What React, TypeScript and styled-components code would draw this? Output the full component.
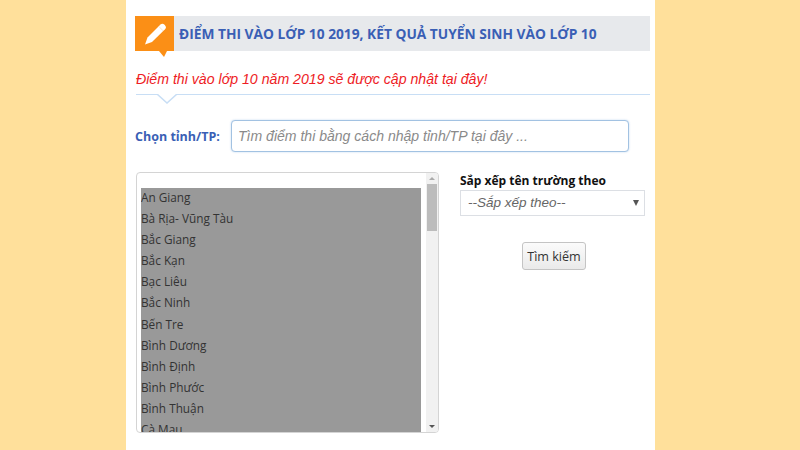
import React from "react";
import styled, { createGlobalStyle } from "styled-components";

const Global = createGlobalStyle`
  html, body { margin: 0; padding: 0; height: 450px; overflow: hidden; background: #ffe09b; }
  * { box-sizing: border-box; }
`;
const Page = styled.div`
  width: 800px; height: 450px; overflow: hidden; display: flex; padding-left: 126px; background: #ffe09b;
`;
const Column = styled.main`
  width: 529px; height: 450px; background: #fff; padding: 16px 5px 0 9px;
  font-family: "Liberation Sans", Arial, sans-serif; display: flex; flex-direction: column;
`;
const TitleBar = styled.header`
  height: 35px; background: #e7e9ec; display: flex; align-items: center; gap: 5px;
`;
const Badge = styled.div`
  position: relative; width: 39px; height: 35px; background: #fb8f16; display: flex; align-items: center; justify-content: center;
  &::after { content: ""; position: absolute; left: 24px; top: 35px; border-top: 6px solid #fb8f16; border-left: 5px solid transparent; border-right: 3px solid transparent; }
`;
const Title = styled.h1`
  margin: -1px 0 0; font: bold 13.75px "Open Sans", sans-serif; color: #3a5fb5; white-space: nowrap;
`;
const Notice = styled.p`
  margin: 18px 0 0 1px; font: italic 14.15px/20px "Liberation Sans", Arial, sans-serif; color: #ee1c25; white-space: nowrap;
`;
const Rule = styled.div`
  position: relative; height: 1px; margin: 5px 0 0 1px; background: #c8def5;
`;
const Notch = styled.svg`
  position: absolute; left: 21px; top: 0; display: block;
`;
const SearchRow = styled.div`
  display: flex; align-items: center; margin-top: 25px; height: 32px;
`;
const Label = styled.label`
  width: 96px; font: bold 12.5px "Open Sans", sans-serif; color: #3a5fb5; white-space: nowrap;
`;
const SearchInput = styled.input`
  width: 398px; height: 32px; border: 1.5px solid #a2c2e2; border-radius: 4px; padding: 0 6px; outline: none;
  font: italic 14.05px "Liberation Sans", Arial, sans-serif; background: #fff;
  box-shadow: 0 0 2px rgba(102,160,220,.45);
  &::placeholder { color: #8a8a8a; opacity: 1; }
`;
const Body = styled.div`
  display: flex; margin-top: 20px;
`;
const ListBox = styled.div`
  position: relative; width: 303px; height: 261px; margin-left: 1px; border: 1px solid #d4d4d4; border-radius: 4px; padding: 15px 0 0 4px; overflow: hidden; background: #fff;
`;
const Options = styled.ul`
  margin: 0; padding: 0; list-style: none; width: 280px; height: 245px; overflow: hidden; background: #999;
`;
const Option = styled.li`
  height: 21.1px; font: 11.8px/19px "Open Sans", sans-serif; color: #333; white-space: nowrap;
`;
const Track = styled.div`
  position: absolute; right: 0; top: 0; bottom: 0; width: 12px; background: #f1f1f1;
`;
const Thumb = styled.div`
  position: absolute; left: 1px; top: 11px; width: 10px; height: 47px; background: #bcbcbc;
`;
const Arrow = styled.div<{ $down?: boolean }>`
  position: absolute; left: 3px; ${p => (p.$down ? "bottom: 4px; border-top: 3px solid #555;" : "top: 4px; border-bottom: 3px solid #aaa;")}
  border-left: 3px solid transparent; border-right: 3px solid transparent;
`;
const Side = styled.aside`
  width: 185px; margin-left: 21px; display: flex; flex-direction: column; align-items: center; padding-top: 1px;
`;
const SideLabel = styled.div`
  align-self: flex-start; font: bold 12px/16px "Open Sans", sans-serif; color: #111; white-space: nowrap;
`;
const FakeSelect = styled.div`
  position: relative; width: 185px; height: 26px; margin-top: 1px; border: 1px solid #dcdfe4; padding-left: 7px;
  font: italic 13.5px/24px "Liberation Sans", Arial, sans-serif; color: #666;
  &::after { content: ""; position: absolute; right: 5px; top: 9px; border-top: 6px solid #555; border-left: 3px solid transparent; border-right: 3px solid transparent; }
`;
const Button = styled.button`
  width: 64px; height: 28px; margin: 26px 0 0 3px; padding: 0; border: 1px solid #c4c4c4; border-radius: 3px;
  background: linear-gradient(#fbfbfb, #eaeaea); color: #333; font: 12.6px "Open Sans", sans-serif;
`;

const provinces = ["An Giang","Bà Rịa- Vũng Tàu","Bắc Giang","Bắc Kạn","Bạc Liêu","Bắc Ninh","Bến Tre","Bình Dương","Bình Định","Bình Phước","Bình Thuận","Cà Mau"];

export default function App() {
  return (
    <Page>
      <Global />
      <Column>
        <TitleBar>
          <Badge>
            <svg width="26" height="26" viewBox="0 0 26 26" aria-hidden="true">
              <path d="M3 23.5 L5.5 16.5 L18.5 3.5 Q20.5 1.8 22.8 4 Q25 6.3 23 8.3 L10 21 Z" fill="#fff" />
              <path d="M16.8 5.4 L21.2 9.9" stroke="#fbd9ae" strokeWidth="0.7" fill="none" />
            </svg>
          </Badge>
          <Title>ĐIỂM THI VÀO LỚP 10 2019, KẾT QUẢ TUYỂN SINH VÀO LỚP 10</Title>
        </TitleBar>
        <Notice>Điểm thi vào lớp 10 năm 2019 sẽ được cập nhật tại đây!</Notice>
        <Rule>
          <Notch width="20" height="10" viewBox="0 0 20 10" aria-hidden="true">
            <path d="M0 0 L10 9 L20 0" fill="#fff" stroke="#c8def5" strokeWidth="1.5" />
          </Notch>
        </Rule>
        <SearchRow>
          <Label>Chọn tỉnh/TP:</Label>
          <SearchInput placeholder="Tìm điểm thi bằng cách nhập tỉnh/TP tại đây ..." />
        </SearchRow>
        <Body>
          <ListBox>
            <Options>
              {provinces.map(p => <Option key={p}>{p}</Option>)}
            </Options>
            <Track>
              <Arrow />
              <Thumb />
              <Arrow $down />
            </Track>
          </ListBox>
          <Side>
            <SideLabel>Sắp xếp tên trường theo</SideLabel>
            <FakeSelect>--Sắp xếp theo--</FakeSelect>
            <Button>Tìm kiếm</Button>
          </Side>
        </Body>
      </Column>
    </Page>
  );
}
